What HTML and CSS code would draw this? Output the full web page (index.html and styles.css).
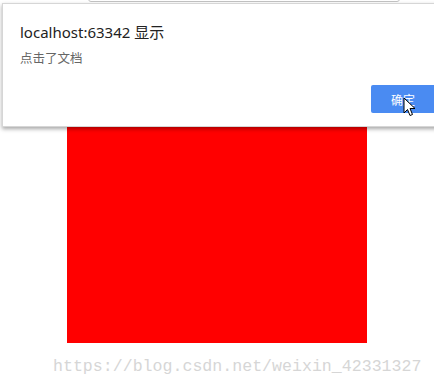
FILE: index.html
```html
<!DOCTYPE html>
<html lang="zh-CN">
<head>
    <meta charset="UTF-8">
    <meta name="viewport" content="width=device-width, initial-scale=1.0">
    <title>点击文档</title>
    <link rel="stylesheet" href="styles.css">
</head>
<body>
    <div class="toolbar-edge"></div>

    <div class="page">
        <div class="box"></div>
        <p class="watermark">https://blog.csdn.net/weixin_42331327</p>
    </div>

    <div class="dialog">
        <h1 class="dialog-title">localhost:63342 显示</h1>
        <p class="dialog-message">点击了文档</p>
        <div class="dialog-actions">
            <button type="button" class="ok-btn">确定</button>
        </div>
        <svg class="cursor" width="13" height="20" viewBox="0 0 13 20">
            <path d="M1 1 L1 16 L4.5 12.5 L7 18.5 L9.5 17.5 L7 11.5 L12 11.5 Z" fill="#fff" stroke="#000" stroke-width="1" stroke-linejoin="round"/>
        </svg>
    </div>
</body>
</html>
```

FILE: styles.css
```css
body {
    margin: 0;
    background-color: #fff;
    font-family: "Noto Sans", "Noto Sans CJK SC", sans-serif;
    overflow: hidden;
}
.toolbar-edge {
    position: absolute;
    left: 88px;
    top: -12px;
    width: 310px;
    height: 12px;
    border: 1px solid #c4c4c4;
    border-radius: 3px;
}
.page {
    padding: 43px 0 0 67px;
}
.box {
    width: 300px;
    height: 300px;
    background-color: #ff0000;
}
.watermark {
    margin: 14px 0 0 -14px;
    font-family: "Liberation Mono", monospace;
    font-size: 16.6px;
    color: #d6d6d6;
}
.dialog {
    position: absolute;
    left: 2px;
    top: 3px;
    width: 450px;
    height: 124px;
    background-color: #fff;
    border: 1px solid #d6d6d6;
    box-shadow: 0 2px 4px rgba(0, 0, 0, 0.35);
    box-sizing: border-box;
}
.dialog-title {
    margin: 18px 0 0 17px;
    font-size: 15px;
    font-weight: normal;
    color: #222;
    line-height: 20px;
}
.dialog-message {
    margin: 9px 0 0 17px;
    font-size: 12.5px;
    color: #666;
    line-height: 16px;
}
.dialog-actions {
    padding-left: 368px;
    margin-top: 18px;
}
.ok-btn {
    width: 80px;
    height: 28px;
    border: none;
    border-radius: 2px;
    background-color: #4a8bf2;
    color: #fff;
    font-family: "Noto Sans CJK SC", sans-serif;
    font-size: 12px;
    padding: 0;
    text-align: left;
    text-indent: 20px;
}
.cursor {
    position: absolute;
    left: 400px;
    top: 93px;
}
```
